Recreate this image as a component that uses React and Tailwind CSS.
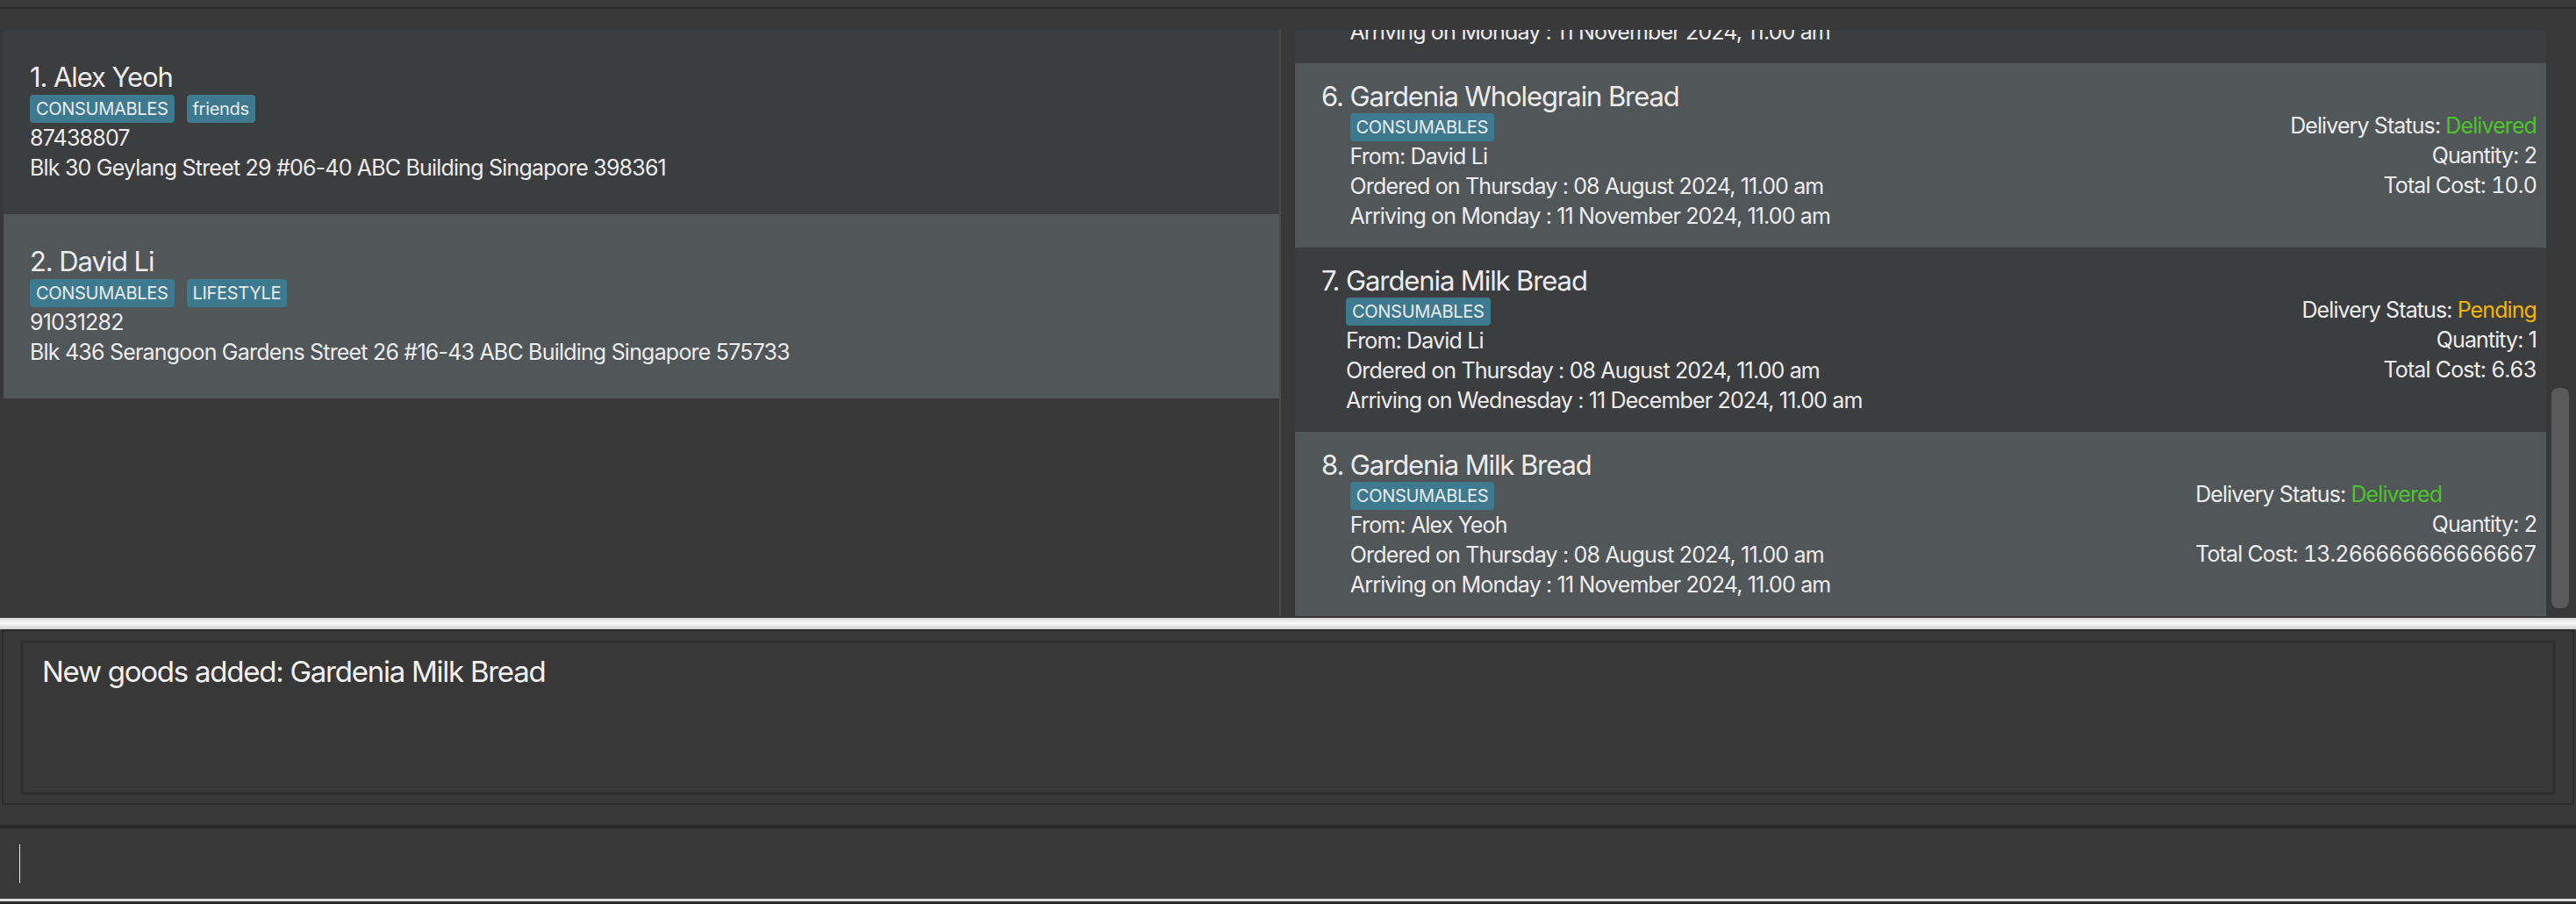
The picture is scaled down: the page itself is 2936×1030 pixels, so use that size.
const people = [
  {
    id: 1,
    name: "Alex Yeoh",
    tags: ["CONSUMABLES", "friends"],
    phone: "87438807",
    address: "Blk 30 Geylang Street 29 #06-40 ABC Building Singapore 398361",
  },
  {
    id: 2,
    name: "David Li",
    tags: ["CONSUMABLES", "LIFESTYLE"],
    phone: "91031282",
    address: "Blk 436 Serangoon Gardens Street 26 #16-43 ABC Building Singapore 575733",
  },
];

const goods = [
  {
    id: 5,
    name: "Gardenia Milk Bread",
    from: "Alex Yeoh",
    ordered: "Thursday : 08 August 2024, 11.00 am",
    arriving: "Monday : 11 November 2024, 11.00 am",
    status: "Delivered",
    qty: 1,
    cost: "6.63",
  },
  {
    id: 6,
    name: "Gardenia Wholegrain Bread",
    from: "David Li",
    ordered: "Thursday : 08 August 2024, 11.00 am",
    arriving: "Monday : 11 November 2024, 11.00 am",
    status: "Delivered",
    qty: 2,
    cost: "10.0",
  },
  {
    id: 7,
    name: "Gardenia Milk Bread",
    from: "David Li",
    ordered: "Thursday : 08 August 2024, 11.00 am",
    arriving: "Wednesday : 11 December 2024, 11.00 am",
    status: "Pending",
    qty: 1,
    cost: "6.63",
  },
  {
    id: 8,
    name: "Gardenia Milk Bread",
    from: "Alex Yeoh",
    ordered: "Thursday : 08 August 2024, 11.00 am",
    arriving: "Monday : 11 November 2024, 11.00 am",
    status: "Delivered",
    qty: 2,
    cost: "13.266666666666667",
  },
];

function Tag({ label }) {
  return (
    <span className="flex h-[32px] items-center rounded-[4px] bg-[#3e7a8f] px-[7px] text-[20px] leading-none tracking-[-0.3px] text-[#eaeaea]">
      {label}
    </span>
  );
}

function PersonCard({ person, index }) {
  const bg = index % 2 === 0 ? "bg-[#3c3d3f]" : "bg-[#515659]";
  return (
    <div className={`flex h-[210px] items-center pl-[30px] ${bg}`}>
      <div className="flex flex-col">
        <p className="text-[31px] leading-[36px] tracking-[-1.1px]">
          {person.id}. {person.name}
        </p>
        <div className="mt-[2px] flex gap-[14px]">
          {person.tags.map((t) => (
            <Tag key={t} label={t} />
          ))}
        </div>
        <div className="text-[25px] leading-[34px] tracking-[-0.8px]">
          <p>{person.phone}</p>
          <p>{person.address}</p>
        </div>
      </div>
    </div>
  );
}

function GoodsCard({ item, index }) {
  const bg = index % 2 === 0 ? "bg-[#515659]" : "bg-[#3c3d3f]";
  const statusColor = item.status === "Pending" ? "text-[#f5b400]" : "text-[#4cc52a]";
  return (
    <div className={`flex h-[210px] shrink-0 items-center pl-[30px] pr-[11px] ${bg}`}>
      <div className="flex flex-1">
        <span className="whitespace-pre text-[31px] leading-[36px] tracking-[-1.1px]">{item.id}. </span>
        <div className="flex flex-col">
          <p className="text-[31px] leading-[36px] tracking-[-1.1px]">{item.name}</p>
          <div className="mt-[1px] flex">
            <Tag label="CONSUMABLES" />
          </div>
          <div className="text-[25px] leading-[34px] tracking-[-0.85px]">
            <p>From: {item.from}</p>
            <p>Ordered on {item.ordered}</p>
            <p>Arriving on {item.arriving}</p>
          </div>
        </div>
      </div>
      <div className="flex flex-col items-end text-[25px] leading-[34px] tracking-[-0.9px]">
        <p className="self-stretch">
          Delivery Status: <span className={statusColor}>{item.status}</span>
        </p>
        <p>Quantity: {item.qty}</p>
        <p>
          Total Cost: <span className="tabular-nums">{item.cost}</span>
        </p>
      </div>
    </div>
  );
}

export default function App() {
  return (
    <div
      className="flex h-[1030px] w-[2936px] flex-col overflow-hidden bg-[#383838] text-[#ececec]"
      style={{ fontFamily: "Inter, 'Noto Sans', sans-serif" }}
    >
      <div className="h-[8px] bg-[#3a3a3a]" />
      <div className="h-[2px] bg-[#2b2b2b]" />

      <div className="mt-[24px] flex h-[668px]">
        <div className="ml-[4px] flex w-[1454px] flex-col">
          {people.map((p, i) => (
            <PersonCard key={p.id} person={p} index={i} />
          ))}
        </div>
        <div className="w-[2px] bg-[#4a4a4a]" />
        <div className="ml-[16px] flex w-[1426px] flex-col overflow-hidden">
          <div className="-mt-[172px] flex flex-col">
            {goods.map((g, i) => (
              <GoodsCard key={g.id} item={g} index={i + 1} />
            ))}
          </div>
        </div>
        <div className="flex flex-1 flex-col pl-[6px] pr-[8px] pt-[408px] pb-[9px]">
          <div className="h-[251px] w-[20px] rounded-[8px] bg-[#5a5a5a]" />
        </div>
      </div>

      <div className="mt-[2px] h-[13px] bg-gradient-to-b from-[#d9d9d9] via-[#fafafa] to-[#cdcdcd]" />

      <div className="mx-[2px] flex h-[200px] flex-col border-2 border-[#2b2b2b] px-[20px] pb-[10px] pt-[11px]">
        <div className="flex-1 border-2 border-[#2b2b2b] pl-[22px] pt-[13px]">
          <p className="text-[33px] leading-[40px] tracking-[-1.25px] text-[#f2f2f2]">
            New goods added: Gardenia Milk Bread
          </p>
        </div>
      </div>

      <div className="mt-[23px] h-[4px] bg-[#2b2b2b]" />
      <div className="flex h-[80px] items-center pl-[22px]">
        <div className="h-[44px] w-[1px] bg-[#e6e6e6]" />
      </div>
      <div className="h-[3px] bg-[#dcdcdc]" />
      <div className="flex-1 bg-[#2b2b2b]" />
    </div>
  );
}
